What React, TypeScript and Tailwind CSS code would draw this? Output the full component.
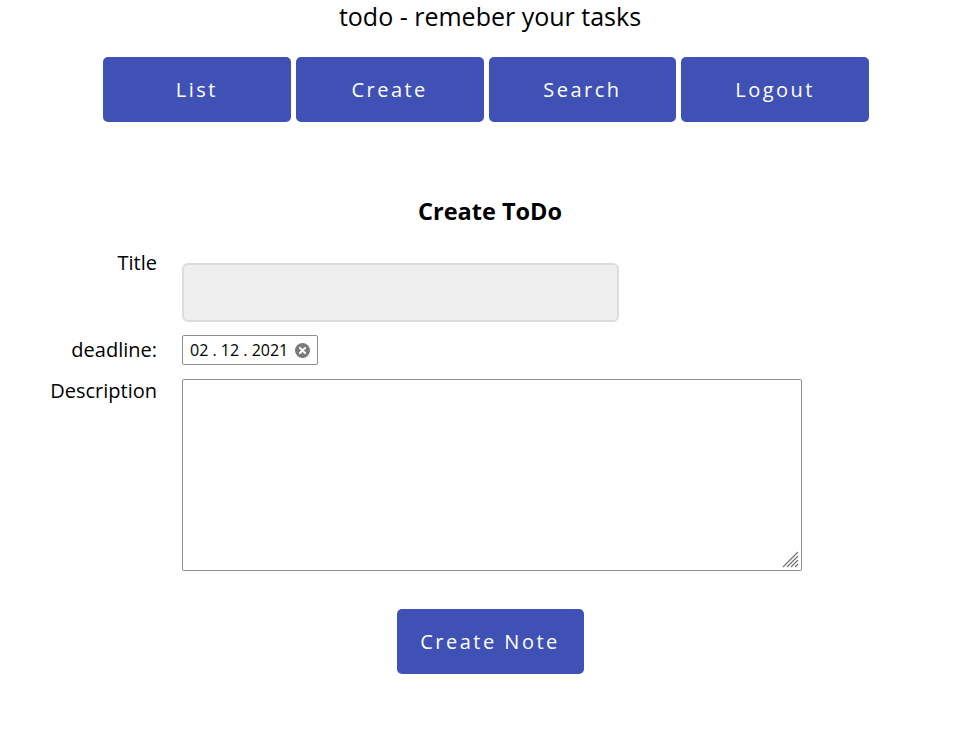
import { useState } from 'react';

const NAV = ['List', 'Create', 'Search', 'Logout'];

export default function App() {
  const [title, setTitle] = useState('');
  const [description, setDescription] = useState('');

  return (
    <div className="min-h-screen bg-white text-black font-['Open_Sans',sans-serif] pl-[20px]">
      <h1 className="text-center text-[25px] leading-[32px]">todo - remeber your tasks</h1>

      <nav className="flex justify-center gap-[5px] mt-[25px] pr-[8px]">
        {NAV.map((item) => (
          <button
            key={item}
            className="w-[187.75px] h-[65px] rounded-[5px] bg-[#3f51b5] text-white text-[20px] tracking-[2.5px]"
          >
            {item}
          </button>
        ))}
      </nav>

      <h2 className="text-center font-bold text-[23.5px] leading-[32px] mt-[73px]">Create ToDo</h2>

      <div className="grid grid-cols-[137px_auto] gap-x-[25px] mt-[22px] text-[20px]">
        <label className="text-right leading-[28px] self-start">Title</label>
        <input
          value={title}
          onChange={(e) => setTitle(e.target.value)}
          className="w-[437px] h-[59px] mt-[14px] rounded-[6px] bg-[#efefef] border-2 border-[#dcdcdc] outline-none px-3"
        />

        <label className="text-right leading-[30px] mt-[13px]">deadline:</label>
        <div className="mt-[13px] w-[136px] h-[30px] border border-[#8f8f8f] rounded-[2px] flex items-center pl-[7px] gap-[7px] text-[16px]">
          <span className="whitespace-pre">02 . 12 . 2021</span>
          <svg width="15" height="15" viewBox="0 0 14 14">
            <circle cx="7" cy="7" r="7" fill="#7a7a7a" />
            <path d="M4.6 4.6 L9.4 9.4 M9.4 4.6 L4.6 9.4" stroke="white" strokeWidth="1.9" strokeLinecap="round" />
          </svg>
        </div>

        <label className="text-right leading-[28px] mt-[12px]">Description</label>
        <div className="relative mt-[14px] w-[620px] h-[192px]">
          <textarea
            value={description}
            onChange={(e) => setDescription(e.target.value)}
            className="w-full h-full border border-[#8f8f8f] rounded-[2px] resize-none outline-none p-1"
          />
          <svg className="absolute right-[3px] bottom-[3px]" width="17" height="17" viewBox="0 0 17 17">
            <path
              d="M16 1 L1 16 M16 5 L5 16 M16 9 L9 16 M16 13 L13 16"
              stroke="#6e6e6e"
              strokeWidth="1.1"
            />
          </svg>
        </div>
      </div>

      <div className="flex justify-center mt-[38px]">
        <button className="w-[187px] h-[65px] rounded-[5px] bg-[#3f51b5] text-white text-[20px] tracking-[2.5px]">
          Create Note
        </button>
      </div>
    </div>
  );
}
